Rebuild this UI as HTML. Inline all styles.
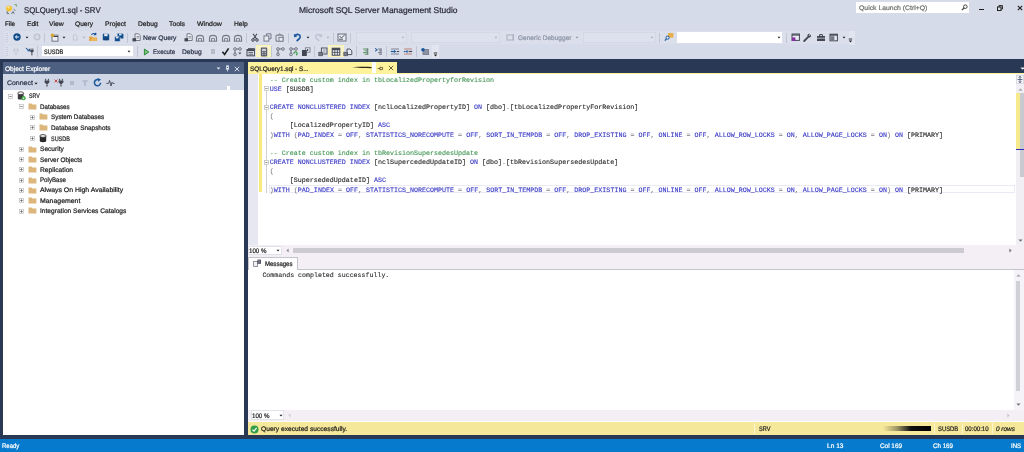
<!DOCTYPE html>
<html><head><meta charset="utf-8"><title>SQLQuery1.sql - SRV</title>
<style>
*{box-sizing:border-box;margin:0;padding:0}
html,body{width:1024px;height:452px;overflow:hidden;background:#d6dbe9;font-family:"Liberation Sans",sans-serif;color:#1e1e1e;text-rendering:geometricPrecision}
#app{position:relative;width:1024px;height:452px;overflow:hidden;background:#d6dbe9;will-change:transform}
.a{position:absolute;white-space:nowrap}
.t{position:absolute;white-space:nowrap;transform-origin:0 50%;-webkit-text-stroke:0.22px currentColor}
.code{-webkit-text-stroke:0.1px currentColor;position:absolute;font-family:"Liberation Mono","DejaVu Sans Mono",monospace;white-space:pre;color:#222}
.kw{color:#3636c6}.cm{color:#3f9350}.gr{color:#808080}
</style></head><body><div id="app">
<svg class="a" style="left:4.00px;top:3.00px" width="14" height="12" viewBox="0 0 14 12"><circle cx="5" cy="5.4" r="3" fill="#f2c230"/><circle cx="4.6" cy="4.2" r="1.3" fill="#f9e08a"/><path d="M10.5 1.6 H12.4 V3.6" fill="none" stroke="#6fa86a" stroke-width="1"/><path d="M3.2 8.2 V10.6 H5 M7.5 10.8 L9 8.6 L10.2 10.8 M9.6 6.4 L11.4 7.6" stroke="#59606e" stroke-width="0.9" fill="none"/></svg>
<div class="t" style="left:23.75px;top:4px;font-size:8.40px;line-height:12px;color:#2a2a38;transform:scaleX(0.9370);">SQLQuery1.sql - SRV</div>
<div class="t" style="left:298.50px;top:4px;font-size:8.40px;line-height:12px;color:#2a2a38;transform:scaleX(1.0095);">Microsoft SQL Server Management Studio</div>
<div class="a" style="left:856px;top:2px;width:113px;height:11px;background:#fff;"></div>
<div class="t" style="left:858.60px;top:3px;font-size:6.60px;line-height:12px;color:#717171;transform:scaleX(1.0389);">Quick Launch (Ctrl+Q)</div>
<svg class="a" style="left:960.50px;top:4.00px" width="7" height="7" viewBox="0 0 7 7"><circle cx="4.3" cy="2.7" r="1.8" fill="none" stroke="#444" stroke-width="1"/><path d="M3 4 L0.8 6.2" stroke="#444" stroke-width="1.2"/></svg>
<div class="a" style="left:978.5px;top:8.5px;width:5px;height:1.5px;background:#1e1e1e;"></div>
<svg class="a" style="left:997.00px;top:4.70px" width="6" height="6" viewBox="0 0 6 6"><rect x="0.5" y="2" width="3.5" height="3.5" fill="none" stroke="#1e1e1e" stroke-width="1"/><path d="M2 2 V0.6 H5.4 V4 H4" fill="none" stroke="#1e1e1e" stroke-width="1"/></svg>
<svg class="a" style="left:1016.80px;top:4.70px" width="6" height="6" viewBox="0 0 6 6"><path d="M0.8 0.8 L5.2 5.2 M5.2 0.8 L0.8 5.2" stroke="#1e1e1e" stroke-width="1.1"/></svg>
<div class="t" style="left:4.75px;top:19px;font-size:6.60px;line-height:12px;color:#1e1e1e;transform:scaleX(0.9403);">File</div>
<div class="t" style="left:26.50px;top:19px;font-size:6.60px;line-height:12px;color:#1e1e1e;transform:scaleX(1.0024);">Edit</div>
<div class="t" style="left:49.10px;top:19px;font-size:6.60px;line-height:12px;color:#1e1e1e;transform:scaleX(1.0326);">View</div>
<div class="t" style="left:75.00px;top:19px;font-size:6.60px;line-height:12px;color:#1e1e1e;transform:scaleX(1.0071);">Query</div>
<div class="t" style="left:105.00px;top:19px;font-size:6.60px;line-height:12px;color:#1e1e1e;transform:scaleX(1.0223);">Project</div>
<div class="t" style="left:137.75px;top:19px;font-size:6.60px;line-height:12px;color:#1e1e1e;transform:scaleX(1.0103);">Debug</div>
<div class="t" style="left:169.25px;top:19px;font-size:6.60px;line-height:12px;color:#1e1e1e;transform:scaleX(1.0384);">Tools</div>
<div class="t" style="left:197.10px;top:19px;font-size:6.60px;line-height:12px;color:#1e1e1e;transform:scaleX(1.0607);">Window</div>
<div class="t" style="left:234.00px;top:19px;font-size:6.60px;line-height:12px;color:#1e1e1e;transform:scaleX(1.0129);">Help</div>
<div class="a" style="left:5px;top:31.3px;width:843.5px;height:12.4px;background:#dadfeb;"></div>
<div class="a" style="left:848.5px;top:30.5px;width:6px;height:14px;background:#e1e5f0;"></div>
<div class="a" style="left:5px;top:45.2px;width:427px;height:12.6px;background:#dadfeb;"></div>
<div class="a" style="left:5.50px;top:33px;width:2px;height:9px;background:repeating-linear-gradient(#b4bacb 0 1px,transparent 1px 2px);opacity:.45"></div>
<svg class="a" style="left:13.00px;top:33.30px" width="8" height="8" viewBox="0 0 8 8"><circle cx="4" cy="4" r="3.7" fill="#114d8a"/><path d="M5.8 4 H2.6 M3.9 2.6 L2.4 4 L3.9 5.4" stroke="#fff" stroke-width="1" fill="none"/></svg>
<svg class="a" style="left:25.00px;top:36.00px" width="4" height="3" viewBox="0 0 4 3"><path d="M0.6000000000000001 0.7 H3.4 L2 2.4 Z" fill="#1e1e1e"/></svg>
<svg class="a" style="left:32.50px;top:33.30px" width="8" height="8" viewBox="0 0 8 8"><circle cx="4" cy="4" r="2.8" fill="#d6dae6" stroke="#bdc2cf" stroke-width="1.3"/></svg>
<div class="a" style="left:44.00px;top:32.5px;width:1px;height:10.5px;background:#bfc6d6"></div>
<svg class="a" style="left:49.50px;top:32.80px" width="9" height="9" viewBox="0 0 9 9"><rect x="2" y="2.2" width="6" height="6" fill="#eceef4" stroke="#747988" stroke-width="1"/><path d="M2 3.5 H8" stroke="#424652" stroke-width="1"/><circle cx="2.5" cy="2.3" r="1.8" fill="#d9a62e"/></svg>
<svg class="a" style="left:62.00px;top:36.00px" width="4" height="3" viewBox="0 0 4 3"><path d="M0.6000000000000001 0.7 H3.4 L2 2.4 Z" fill="#1e1e1e"/></svg>
<svg class="a" style="left:71.00px;top:32.80px" width="8" height="9" viewBox="0 0 8 9"><path d="M2.4 2 H4.8 L6 3.2 V7 H2.4 Z" fill="#dfe3ee" stroke="#bcc1cf" stroke-width="0.9"/></svg>
<svg class="a" style="left:82.00px;top:36.00px" width="4" height="3" viewBox="0 0 4 3"><path d="M0.6000000000000001 0.7 H3.4 L2 2.4 Z" fill="#a9afbf"/></svg>
<svg class="a" style="left:88.00px;top:32.30px" width="10" height="10" viewBox="0 0 10 10"><path d="M1.2 4.5 H4 L5 5.4 H9 V9 H1.2 Z" fill="#e3a240"/><path d="M2.5 9 L4 6 H9.5 L8.5 9 Z" fill="#eeb458"/><path d="M3.5 3 C4.5 1.2 6.5 1 7.5 2.5 M7.8 0.8 V2.8 H5.8" stroke="#1a579c" stroke-width="1.1" fill="none"/></svg>
<svg class="a" style="left:102.00px;top:33.30px" width="8" height="8" viewBox="0 0 8 8"><path d="M0.8 0.8 H6.2 L7.2 1.8 V7.2 H0.8 Z" fill="#0f4c8a"/><rect x="2.2" y="0.8" width="3.4" height="2.4" fill="#dfe6f3"/><rect x="2.2" y="4.8" width="3.6" height="2.4" fill="#173f74"/></svg>
<svg class="a" style="left:114.00px;top:32.80px" width="10" height="9" viewBox="0 0 10 9"><path d="M3.5 0.6 H8.4 L9.4 1.6 V5.6 H3.5 Z" fill="#0f4c8a"/><rect x="5" y="0.6" width="2.6" height="1.8" fill="#dfe6f3"/><path d="M0.6 3.6 H5.2 L6.2 4.6 V8.6 H0.6 Z" fill="#0f4c8a" stroke="#dce0ec" stroke-width="0.6"/><rect x="2" y="3.8" width="2.4" height="1.6" fill="#dfe6f3"/></svg>
<div class="a" style="left:127.00px;top:32.5px;width:1px;height:10.5px;background:#bfc6d6"></div>
<svg class="a" style="left:131.50px;top:32.80px" width="9" height="9" viewBox="0 0 9 9"><path d="M3 0.8 H6.5 L8.2 2.5 V7.5 H3 Z" fill="#eef0f5" stroke="#747988" stroke-width="1"/><path d="M4.5 3.5 H7 M4.5 5 H7" stroke="#747988" stroke-width="0.8"/><rect x="0.5" y="5.2" width="3.6" height="3.2" fill="#424652"/></svg>
<svg class="a" style="left:183.50px;top:32.80px" width="9" height="9" viewBox="0 0 9 9"><path d="M3 0.8 H6.5 L8.2 2.5 V7.5 H3 Z" fill="#eef0f5" stroke="#747988" stroke-width="1"/><path d="M4.5 3.5 H7 M4.5 5 H7" stroke="#747988" stroke-width="0.8"/><rect x="0.5" y="5.2" width="3.6" height="3.2" fill="#424652"/></svg>
<svg class="a" style="left:195.00px;top:32.80px" width="10" height="9" viewBox="0 0 10 9"><path d="M1.5 8 V5 C1.5 1.5 8.5 1.5 8.5 5 V8" fill="none" stroke="#747988" stroke-width="1.1"/><path d="M0.8 8.2 H9.2" stroke="#747988" stroke-width="1"/><path d="M3.5 8 V5.5 H6.5 V8" fill="none" stroke="#747988" stroke-width="0.9"/></svg>
<svg class="a" style="left:208.00px;top:32.80px" width="10" height="9" viewBox="0 0 10 9"><path d="M1.5 8 V5 C1.5 1.5 8.5 1.5 8.5 5 V8" fill="none" stroke="#747988" stroke-width="1.1"/><path d="M0.8 8.2 H9.2" stroke="#747988" stroke-width="1"/><path d="M3.5 8 V5.5 H6.5 V8" fill="none" stroke="#747988" stroke-width="0.9"/></svg>
<svg class="a" style="left:221.00px;top:32.80px" width="10" height="9" viewBox="0 0 10 9"><path d="M1.5 8 V5 C1.5 1.5 8.5 1.5 8.5 5 V8" fill="none" stroke="#747988" stroke-width="1.1"/><path d="M0.8 8.2 H9.2" stroke="#747988" stroke-width="1"/><path d="M3.5 8 V5.5 H6.5 V8" fill="none" stroke="#747988" stroke-width="0.9"/></svg>
<svg class="a" style="left:233.00px;top:32.80px" width="10" height="9" viewBox="0 0 10 9"><path d="M1.5 8 V5 C1.5 1.5 8.5 1.5 8.5 5 V8" fill="none" stroke="#747988" stroke-width="1.1"/><path d="M0.8 8.2 H9.2" stroke="#747988" stroke-width="1"/><path d="M3.5 8 V5.5 H6.5 V8" fill="none" stroke="#747988" stroke-width="0.9"/></svg>
<div class="a" style="left:245.90px;top:32.5px;width:1px;height:10.5px;background:#bfc6d6"></div>
<svg class="a" style="left:251.00px;top:32.80px" width="8" height="9" viewBox="0 0 8 9"><path d="M2 0.8 L5.6 6 M6 0.8 L2.4 6" stroke="#424652" stroke-width="1.1"/><circle cx="2" cy="7" r="1.3" fill="none" stroke="#424652" stroke-width="1"/><circle cx="6" cy="7" r="1.3" fill="none" stroke="#424652" stroke-width="1"/></svg>
<svg class="a" style="left:263.40px;top:32.80px" width="9" height="9" viewBox="0 0 9 9"><path d="M3.5 2.8 V0.8 H8 V5.8 H6" fill="none" stroke="#747988" stroke-width="1"/><rect x="1" y="2.9" width="4.8" height="5.2" fill="#e9ecf3" stroke="#747988" stroke-width="1"/></svg>
<svg class="a" style="left:275.40px;top:32.80px" width="9" height="9" viewBox="0 0 9 9"><path d="M1 2.2 H8 V8.2 H1 Z" fill="none" stroke="#747988" stroke-width="1"/><path d="M3 2.2 L4.5 0.6 L6 2.2" fill="none" stroke="#747988" stroke-width="1"/><rect x="4" y="4.4" width="4" height="3.8" fill="#e9ecf3" stroke="#747988" stroke-width="0.9"/></svg>
<div class="a" style="left:288.00px;top:32.5px;width:1px;height:10.5px;background:#bfc6d6"></div>
<svg class="a" style="left:293.10px;top:32.80px" width="9" height="9" viewBox="0 0 9 9"><path d="M2 2.6 C4.5 0.4 8.2 1.6 7 4.6 C6.4 6 5 7 3.6 8" fill="none" stroke="#1a579c" stroke-width="1.6"/><path d="M0.8 0.8 L1.2 4.4 L4.4 3.2 Z" fill="#1a579c"/></svg>
<svg class="a" style="left:305.90px;top:36.00px" width="4" height="3" viewBox="0 0 4 3"><path d="M0.6000000000000001 0.7 H3.4 L2 2.4 Z" fill="#1e1e1e"/></svg>
<svg class="a" style="left:313.50px;top:32.80px" width="9" height="9" viewBox="0 0 9 9"><path d="M7 2.6 C4.5 0.4 0.8 1.6 2 4.6 C2.6 6 4 7 5.4 8" fill="none" stroke="#bcc2d2" stroke-width="1.4"/><path d="M8.2 0.8 L7.8 4.4 L4.6 3.2 Z" fill="#bcc2d2"/></svg>
<svg class="a" style="left:326.00px;top:36.00px" width="4" height="3" viewBox="0 0 4 3"><path d="M0.6000000000000001 0.7 H3.4 L2 2.4 Z" fill="#a9afbf"/></svg>
<div class="a" style="left:333.00px;top:32.5px;width:1px;height:10.5px;background:#bfc6d6"></div>
<svg class="a" style="left:337.00px;top:32.80px" width="10" height="9" viewBox="0 0 10 9"><rect x="1" y="1" width="8" height="7" fill="#e9ecf3" stroke="#747988" stroke-width="1.1"/><path d="M2.5 3 L4.5 5 L8 1.5 M2 6.2 H6" stroke="#424652" stroke-width="0.9" fill="none"/></svg>
<div class="a" style="left:349.80px;top:32.5px;width:1px;height:10.5px;background:#bfc6d6"></div>
<div class="a" style="left:355.8px;top:32px;width:51.0px;height:11px;background:#dde1ee;border:1px solid #d3d8e6"></div>
<svg class="a" style="left:400.60px;top:36.00px" width="4" height="3" viewBox="0 0 4 3"><path d="M0.6000000000000001 0.7 H3.4 L2 2.4 Z" fill="#a9afbf"/></svg>
<div class="a" style="left:410.8px;top:32px;width:89.19999999999999px;height:11px;background:#dde1ee;border:1px solid #d3d8e6"></div>
<svg class="a" style="left:493.80px;top:36.00px" width="4" height="3" viewBox="0 0 4 3"><path d="M0.6000000000000001 0.7 H3.4 L2 2.4 Z" fill="#a9afbf"/></svg>
<div class="a" style="left:582.5px;top:32px;width:73.5px;height:11px;background:#dde1ee;border:1px solid #d3d8e6"></div>
<svg class="a" style="left:649.80px;top:36.00px" width="4" height="3" viewBox="0 0 4 3"><path d="M0.6000000000000001 0.7 H3.4 L2 2.4 Z" fill="#a9afbf"/></svg>
<svg class="a" style="left:505.50px;top:32.80px" width="9" height="9" viewBox="0 0 9 9"><rect x="1" y="2" width="6" height="5" fill="none" stroke="#aab0c0" stroke-width="1"/><path d="M7.5 1 V7.5" stroke="#aab0c0" stroke-width="1"/></svg>
<svg class="a" style="left:575.00px;top:36.00px" width="4" height="3" viewBox="0 0 4 3"><path d="M0.6000000000000001 0.7 H3.4 L2 2.4 Z" fill="#8d93a3"/></svg>
<div class="a" style="left:659.00px;top:32.5px;width:1px;height:10.5px;background:#bfc6d6"></div>
<svg class="a" style="left:664.30px;top:31.90px" width="10" height="10" viewBox="0 0 10 10"><rect x="4" y="1" width="5.4" height="4.6" fill="#e8b04a"/><circle cx="3.6" cy="5.6" r="1.6" fill="#dfe6f3" stroke="#1a579c" stroke-width="1"/><path d="M2.4 6.8 L0.8 8.6" stroke="#1a579c" stroke-width="1.2"/></svg>
<div class="a" style="left:677.4px;top:32px;width:105px;height:11px;background:#fff"></div>
<svg class="a" style="left:777.00px;top:36.00px" width="4" height="3" viewBox="0 0 4 3"><path d="M0.6000000000000001 0.7 H3.4 L2 2.4 Z" fill="#1e1e1e"/></svg>
<div class="a" style="left:786.10px;top:32.5px;width:1px;height:10.5px;background:#bfc6d6"></div>
<svg class="a" style="left:790.90px;top:32.80px" width="9" height="9" viewBox="0 0 9 9"><rect x="1" y="1" width="7.4" height="6.4" fill="#e9ecf3" stroke="#424652" stroke-width="1"/><path d="M1 2 H8.4" stroke="#424652" stroke-width="1.2"/><rect x="1" y="4.4" width="3.4" height="3.6" fill="#8a2da5"/></svg>
<svg class="a" style="left:803.40px;top:32.80px" width="9" height="9" viewBox="0 0 9 9"><path d="M1.2 8 L5 4.2" stroke="#424652" stroke-width="1.8" stroke-linecap="round"/><path d="M7.8 1.6 L6.3 3.1 L5.6 2.4 L7 0.9 C5.5 0.4 3.9 1.8 4.6 3.6 L5.6 4.6 C7.2 5.2 8.6 3.4 7.8 1.6 Z" fill="#424652"/></svg>
<svg class="a" style="left:816.00px;top:32.80px" width="10" height="9" viewBox="0 0 10 9"><rect x="1" y="3" width="8" height="5" fill="#424652"/><path d="M3.6 3 V1.6 H6.4 V3" fill="none" stroke="#424652" stroke-width="1"/><path d="M1 5.2 H9" stroke="#dce0ec" stroke-width="0.7"/></svg>
<svg class="a" style="left:829.00px;top:32.80px" width="9" height="9" viewBox="0 0 9 9"><rect x="1" y="1.2" width="7.4" height="6.6" fill="#e9ecf3" stroke="#424652" stroke-width="1"/><path d="M1 2 H8.4" stroke="#424652" stroke-width="1.4"/><rect x="1.4" y="3.2" width="4" height="4.4" fill="#747988"/></svg>
<svg class="a" style="left:841.50px;top:36.00px" width="4" height="3" viewBox="0 0 4 3"><path d="M0.6000000000000001 0.7 H3.4 L2 2.4 Z" fill="#1e1e1e"/></svg>
<svg class="a" style="left:848.30px;top:37.50px" width="5" height="5" viewBox="0 0 5 5"><path d="M0.8 1 H4.2" stroke="#1e1e1e" stroke-width="0.9"/><path d="M0.8 2.4 H4.2 L2.5 4.4 Z" fill="#1e1e1e"/></svg>
<div class="t" style="left:143.40px;top:33px;font-size:6.60px;line-height:12px;color:#2b3348;transform:scaleX(1.0148);">New Query</div>
<div class="t" style="left:517.50px;top:33px;font-size:6.60px;line-height:12px;color:#8d93a3;transform:scaleX(0.9920);">Generic Debugger</div>
<div class="a" style="left:5.50px;top:47px;width:2px;height:9px;background:repeating-linear-gradient(#b4bacb 0 1px,transparent 1px 2px);opacity:.45"></div>
<svg class="a" style="left:12.00px;top:47.00px" width="8" height="9" viewBox="0 0 8 9"><path d="M2.5 1 V3 M5.5 1 V3 M1.8 3 H6.2 V4.6 L4 6.4 L1.8 4.6 Z M4 6.4 V8.5" fill="none" stroke="#c0c5d3" stroke-width="0.9"/></svg>
<svg class="a" style="left:24.60px;top:47.00px" width="10" height="9" viewBox="0 0 10 9"><path d="M6 1.4 V2.8 M7.8 1.4 V2.8" stroke="#424652" stroke-width="0.8"/><path d="M5.2 2.8 H8.6 V4.4 L6.9 6 L5.2 4.4 Z" fill="#424652"/><path d="M6.9 5.8 V8.4" stroke="#424652" stroke-width="1"/><path d="M0.8 1 L4.4 3.8 M4.4 3.8 V1.8 M4.4 3.8 H2.4" stroke="#114d8a" stroke-width="1" fill="none"/></svg>
<div class="a" style="left:36.80px;top:46px;width:1px;height:11px;background:#bfc6d6"></div>
<div class="a" style="left:42.3px;top:46.2px;width:90.7px;height:10.2px;background:#fff"></div>
<svg class="a" style="left:127.40px;top:50.30px" width="4" height="3" viewBox="0 0 4 3"><path d="M0.6000000000000001 0.7 H3.4 L2 2.4 Z" fill="#1e1e1e"/></svg>
<div class="a" style="left:136.50px;top:46px;width:1px;height:11px;background:#bfc6d6"></div>
<svg class="a" style="left:142.50px;top:47.50px" width="7" height="8" viewBox="0 0 7 8"><path d="M1.4 1 L5.8 4 L1.4 7 Z" fill="#7cc47c" stroke="#2e8b3a" stroke-width="1"/></svg>
<div class="a" style="left:210.5px;top:49.3px;width:4.6px;height:4.6px;background:#b7bbc8"></div>
<svg class="a" style="left:221.10px;top:47.00px" width="9" height="9" viewBox="0 0 9 9"><path d="M1.4 4.8 L3.6 7.4 L7.6 1.4" fill="none" stroke="#1e1e1e" stroke-width="1.6"/></svg>
<svg class="a" style="left:233.30px;top:46.50px" width="9" height="10" viewBox="0 0 9 10"><rect x="0.8" y="0.8" width="2.4" height="2.4" rx="0.7" fill="none" stroke="#5d616e" stroke-width="0.9"/><rect x="0.8" y="6.2" width="2.4" height="2.4" rx="0.7" fill="none" stroke="#5d616e" stroke-width="0.9"/><rect x="5.8" y="0.8" width="2.4" height="2.4" rx="0.7" fill="none" stroke="#5d616e" stroke-width="0.9"/><path d="M2 3.3 V6.1 M3.3 2 H5.7" stroke="#5d616e" stroke-width="0.9"/><path d="M5.4 5.6 H8.4 L6.9 7.6 Z" fill="#424652"/></svg>
<svg class="a" style="left:245.90px;top:46.50px" width="10" height="10" viewBox="0 0 10 10"><path d="M2 1.6 H8.6 V3" fill="none" stroke="#424652" stroke-width="0.9"/><rect x="1" y="2.6" width="7.4" height="6.2" fill="#e9ecf3" stroke="#424652" stroke-width="1"/><path d="M1 3.4 H8.4" stroke="#424652" stroke-width="1.3"/><path d="M2.4 5.4 H7 M2.4 7.2 H7" stroke="#424652" stroke-width="0.9"/></svg>
<div class="a" style="left:256.4px;top:44.8px;width:15.0px;height:12.700000000000003px;background:#f6f2d0;border:1.5px solid #fbf3b0"></div>
<svg class="a" style="left:260.00px;top:46.60px" width="8" height="10" viewBox="0 0 8 10"><rect x="0.8" y="0.6" width="6.4" height="8.8" rx="0.8" fill="#5c606c"/><rect x="2" y="1.8" width="4" height="2.4" fill="#c9ccd6"/><path d="M2 5.6 H3.4 M4.6 5.6 H6 M2 7.4 H3.4 M4.6 7.4 H6" stroke="#c9ccd6" stroke-width="0.9"/></svg>
<div class="a" style="left:271.25px;top:46px;width:1px;height:11px;background:#bfc6d6"></div>
<svg class="a" style="left:275.50px;top:46.50px" width="9" height="10" viewBox="0 0 9 10"><rect x="0.8" y="0.8" width="2.4" height="2.4" rx="0.7" fill="none" stroke="#5d616e" stroke-width="0.9"/><rect x="0.8" y="6.2" width="2.4" height="2.4" rx="0.7" fill="none" stroke="#5d616e" stroke-width="0.9"/><rect x="5.8" y="0.8" width="2.4" height="2.4" rx="0.7" fill="none" stroke="#5d616e" stroke-width="0.9"/><path d="M2 3.3 V6.1 M3.3 2 H5.7" stroke="#5d616e" stroke-width="0.9"/></svg>
<svg class="a" style="left:288.50px;top:46.50px" width="9" height="10" viewBox="0 0 9 10"><rect x="0.8" y="0.8" width="2.4" height="2.4" rx="0.7" fill="none" stroke="#5d616e" stroke-width="0.9"/><rect x="0.8" y="6.2" width="2.4" height="2.4" rx="0.7" fill="none" stroke="#5d616e" stroke-width="0.9"/><rect x="5.8" y="0.8" width="2.4" height="2.4" rx="0.7" fill="none" stroke="#5d616e" stroke-width="0.9"/><path d="M2 3.3 V6.1 M3.3 2 H5.7" stroke="#5d616e" stroke-width="0.9"/><path d="M5 6.8 A1.6 1.6 0 1 1 7 8" fill="none" stroke="#3c9a48" stroke-width="1.1"/></svg>
<svg class="a" style="left:300.75px;top:46.50px" width="10" height="10" viewBox="0 0 10 10"><rect x="4.4" y="0.8" width="4.6" height="4.4" fill="#e9ecf3" stroke="#747988" stroke-width="0.9"/><rect x="1" y="3" width="4.8" height="6" fill="#424652"/><path d="M6.6 2 V4 " stroke="#424652" stroke-width="1.2"/></svg>
<div class="a" style="left:314.00px;top:46px;width:1px;height:11px;background:#bfc6d6"></div>
<svg class="a" style="left:318.25px;top:46.50px" width="10" height="10" viewBox="0 0 10 10"><rect x="3.4" y="1" width="5.6" height="6" fill="#e4e7ef" stroke="#424652" stroke-width="0.9"/><path d="M5 3 H7.6 M5 5 H7.6" stroke="#747988" stroke-width="0.8"/><rect x="0.8" y="5.2" width="3.6" height="3.6" fill="#747988" stroke="#424652" stroke-width="0.6"/></svg>
<div class="a" style="left:328.4px;top:45px;width:15.200000000000045px;height:12.200000000000003px;background:#f6f2d0;border:1.5px solid #fbf3b0"></div>
<svg class="a" style="left:330.60px;top:46.50px" width="10" height="10" viewBox="0 0 10 10"><rect x="1.2" y="1.2" width="7.6" height="7" fill="#e9ecf3" stroke="#424652" stroke-width="1"/><rect x="1.2" y="1.2" width="7.6" height="2" fill="#424652"/><path d="M1.2 5.4 H8.8 M3.8 3.2 V8.2 M6.4 3.2 V8.2" stroke="#424652" stroke-width="0.8"/></svg>
<svg class="a" style="left:343.25px;top:46.50px" width="10" height="10" viewBox="0 0 10 10"><path d="M4 7.6 V2 H7 L8.8 3.8 V7.6 Z" fill="#e4e7ef" stroke="#424652" stroke-width="0.9"/><rect x="0.8" y="5.2" width="3.8" height="3.6" fill="#747988" stroke="#424652" stroke-width="0.6"/></svg>
<div class="a" style="left:355.90px;top:46px;width:1px;height:11px;background:#bfc6d6"></div>
<svg class="a" style="left:360.50px;top:47.00px" width="9" height="9" viewBox="0 0 9 9"><path d="M2 2 H7.5 M3.5 3.8 H7.5 M2 5.6 H7.5 M3.5 7.2 H7.5" stroke="#5f9d62" stroke-width="1"/><path d="M6.4 1.4 V7.8" stroke="#6e7486" stroke-width="0.9"/></svg>
<svg class="a" style="left:373.50px;top:47.00px" width="9" height="9" viewBox="0 0 9 9"><path d="M1 1.4 L3.4 2.8 L1 4.2" fill="none" stroke="#1a579c" stroke-width="1"/><path d="M4 2 H7.6 M5 3.8 H7.6 M4 5.6 H7.6 M5 7.2 H7.6" stroke="#7b8092" stroke-width="1"/><path d="M7 1.4 V7.8" stroke="#747988" stroke-width="0.9"/></svg>
<div class="a" style="left:386.25px;top:46px;width:1px;height:11px;background:#bfc6d6"></div>
<svg class="a" style="left:390.00px;top:47.00px" width="10" height="9" viewBox="0 0 10 9"><path d="M1 2 H9 M1 7 H9" stroke="#747988" stroke-width="0.9"/><path d="M0.8 4.5 H4.4" stroke="#1a579c" stroke-width="1.2"/><path d="M4 2.9 L6.4 4.5 L4 6.1 Z" fill="#1a579c"/><path d="M6.8 4.5 H9.2" stroke="#424652" stroke-width="1.1"/></svg>
<svg class="a" style="left:402.60px;top:47.00px" width="10" height="9" viewBox="0 0 10 9"><path d="M1 2 H9 M1 7 H9" stroke="#b46a5a" stroke-width="0.8"/><path d="M5.6 4.5 H9.2" stroke="#424652" stroke-width="1.2"/><path d="M4.6 2.9 L2.2 4.5 L4.6 6.1 Z" fill="#1a579c"/><path d="M0.8 4.5 H2.4" stroke="#1a579c" stroke-width="1.1"/></svg>
<div class="a" style="left:415.50px;top:46px;width:1px;height:11px;background:#bfc6d6"></div>
<svg class="a" style="left:420.00px;top:47.00px" width="10" height="9" viewBox="0 0 10 9"><rect x="3" y="2.6" width="5.6" height="5" fill="#8c92a2" stroke="#747988" stroke-width="0.8"/><circle cx="3" cy="2.8" r="1.8" fill="#1a579c"/></svg>
<div class="a" style="left:432px;top:45px;width:7px;height:13px;background:#e3e6f0"></div>
<svg class="a" style="left:432.50px;top:51.50px" width="5" height="5" viewBox="0 0 5 5"><path d="M0.8 1 H4.2" stroke="#1e1e1e" stroke-width="0.9"/><path d="M0.8 2.4 H4.2 L2.5 4.4 Z" fill="#1e1e1e"/></svg>
<div class="t" style="left:44.00px;top:47px;font-size:6.60px;line-height:12px;color:#1e1e1e;transform:scaleX(0.8443);">SUSDB</div>
<div class="t" style="left:153.10px;top:47px;font-size:6.60px;line-height:12px;color:#2b3348;transform:scaleX(0.9288);">Execute</div>
<div class="t" style="left:182.10px;top:47px;font-size:6.60px;line-height:12px;color:#2b3348;transform:scaleX(1.0180);">Debug</div>
<div class="a" style="left:0px;top:59px;width:1024px;height:380px;background:#293955;"></div>
<div class="a" style="left:2.5px;top:62px;width:241.5px;height:12px;background:#4d6082;"></div>
<div class="t" style="left:5.30px;top:64px;font-size:6.60px;line-height:12px;color:#ffffff;transform:scaleX(0.9937);">Object Explorer</div>
<svg class="a" style="left:215.70px;top:67.10px" width="5" height="3" viewBox="0 0 5 3"><path d="M0.6 0.5 H4.4 L2.5 2.5 Z" fill="#e8ecf5"/></svg>
<svg class="a" style="left:225.20px;top:65.00px" width="5" height="7" viewBox="0 0 5 7"><rect x="1.6" y="0.8" width="1.8" height="3" fill="none" stroke="#e8ecf5" stroke-width="0.8"/><path d="M0.8 4 H4.2 M2.5 4 V6.4" stroke="#e8ecf5" stroke-width="0.8"/></svg>
<svg class="a" style="left:234.30px;top:65.50px" width="6" height="6" viewBox="0 0 6 6"><path d="M0.8 0.8 L5.2 5.2 M5.2 0.8 L0.8 5.2" stroke="#e8ecf5" stroke-width="0.9"/></svg>
<div class="a" style="left:2.5px;top:74px;width:241.5px;height:16px;background:#cfd6e5;"></div>
<div class="t" style="left:6.90px;top:78px;font-size:6.60px;line-height:12px;color:#2b3348;transform:scaleX(1.0515);">Connect</div>
<svg class="a" style="left:33.60px;top:81.80px" width="4" height="3" viewBox="0 0 4 3"><path d="M0.30000000000000004 0.7 H3.7 L2 2.4 Z" fill="#1e1e1e"/></svg>
<svg class="a" style="left:42.90px;top:78.40px" width="8" height="9" viewBox="0 0 8 9"><path d="M2.6 0.8 V2.6 M5.4 0.8 V2.6" stroke="#424652" stroke-width="1"/><path d="M1.6 2.6 H6.4 V4.6 L4 6.6 L1.6 4.6 Z" fill="#424652"/><path d="M4 6.4 V8.4" stroke="#424652" stroke-width="1.2"/></svg>
<svg class="a" style="left:57.00px;top:78.40px" width="8" height="9" viewBox="0 0 8 9"><path d="M2.6 0.8 V2.6 M5.4 0.8 V2.6" stroke="#424652" stroke-width="1"/><path d="M1.6 2.6 H6.4 V4.6 L4 6.6 L1.6 4.6 Z" fill="#424652"/><path d="M4 6.4 V8.4" stroke="#424652" stroke-width="1.2"/></svg>
<svg class="a" style="left:54.30px;top:79.30px" width="4" height="4" viewBox="0 0 4 4"><path d="M0.6 0.6 L3.4 3.4 M3.4 0.6 L0.6 3.4" stroke="#c8382c" stroke-width="0.9"/></svg>
<div class="a" style="left:69.8px;top:80.7px;width:4.4px;height:4.4px;background:#b4bacb"></div>
<svg class="a" style="left:80.75px;top:78.90px" width="8" height="8" viewBox="0 0 8 8"><path d="M0.8 1.2 H7.2 L4.8 4 V7 H3.2 V4 Z" fill="#b4bacb"/></svg>
<svg class="a" style="left:92.75px;top:78.40px" width="9" height="9" viewBox="0 0 9 9"><path d="M7.6 4.8 A3.1 3.1 0 1 1 5.4 1.7" fill="none" stroke="#1a579c" stroke-width="1.5"/><path d="M4.6 0 L8 1.6 L5.2 3.8 Z" fill="#1a579c"/></svg>
<svg class="a" style="left:105.50px;top:78.90px" width="9" height="8" viewBox="0 0 9 8"><path d="M0.4 4.4 H2.6 L3.6 1.4 L5 7 L6 3.2 L6.8 4.4 H8.6" fill="none" stroke="#424652" stroke-width="0.9"/></svg>
<div class="a" style="left:227.2px;top:85.5px;width:2.4px;height:4.5px;background:#fff"></div>
<div class="a" style="left:2.5px;top:90px;width:241.5px;height:345px;background:#fff;"></div>
<svg class="a" style="left:8.10px;top:93.70px" width="5" height="5" viewBox="0 0 5 5"><rect x="0.4" y="0.4" width="4.2" height="4.2" fill="#fff" stroke="#bdbdbd" stroke-width="0.7"/><path d="M1.2 2.5 H3.8" stroke="#666" stroke-width="0.7"/></svg>
<svg class="a" style="left:16.80px;top:90.90px" width="9" height="10" viewBox="0 0 9 10"><path d="M0.8 2.2 V7.4 C0.8 9 6.6 9 6.6 7.4 V2.2 Z" fill="#3a3a3a"/><ellipse cx="3.7" cy="2.2" rx="2.9" ry="1.4" fill="#f4f4f4" stroke="#3a3a3a" stroke-width="0.8"/><circle cx="6.6" cy="7.2" r="2.1" fill="#3fa845"/><path d="M5.9 6.2 L7.6 7.2 L5.9 8.2 Z" fill="#fff"/></svg>
<div class="t" style="left:29.00px;top:91px;font-size:6.60px;line-height:12px;color:#1e1e1e;transform:scaleX(0.7991);">SRV</div>
<svg class="a" style="left:18.80px;top:104.20px" width="5" height="5" viewBox="0 0 5 5"><rect x="0.4" y="0.4" width="4.2" height="4.2" fill="#fff" stroke="#bdbdbd" stroke-width="0.7"/><path d="M1.2 2.5 H3.8" stroke="#666" stroke-width="0.7"/></svg>
<svg class="a" style="left:27.75px;top:102.90px" width="9" height="7" viewBox="0 0 9 7"><path d="M0.5 0.6 H3.6 L4.4 1.5 H8.4 V6.5 H0.5 Z" fill="#dcb67a"/></svg>
<div class="t" style="left:39.75px;top:102px;font-size:6.60px;line-height:12px;color:#1e1e1e;transform:scaleX(0.9397);">Databases</div>
<svg class="a" style="left:29.75px;top:114.60px" width="5" height="5" viewBox="0 0 5 5"><rect x="0.4" y="0.4" width="4.2" height="4.2" fill="#fff" stroke="#bdbdbd" stroke-width="0.7"/><path d="M1.2 2.5 H3.8" stroke="#666" stroke-width="0.7"/><path d="M2.5 1.2 V3.8" stroke="#555" stroke-width="0.7"/></svg>
<svg class="a" style="left:38.60px;top:113.30px" width="9" height="7" viewBox="0 0 9 7"><path d="M0.5 0.6 H3.6 L4.4 1.5 H8.4 V6.5 H0.5 Z" fill="#dcb67a"/></svg>
<div class="t" style="left:50.60px;top:112px;font-size:6.60px;line-height:12px;color:#1e1e1e;transform:scaleX(0.9595);">System Databases</div>
<svg class="a" style="left:29.75px;top:125.10px" width="5" height="5" viewBox="0 0 5 5"><rect x="0.4" y="0.4" width="4.2" height="4.2" fill="#fff" stroke="#bdbdbd" stroke-width="0.7"/><path d="M1.2 2.5 H3.8" stroke="#666" stroke-width="0.7"/><path d="M2.5 1.2 V3.8" stroke="#555" stroke-width="0.7"/></svg>
<svg class="a" style="left:38.60px;top:123.80px" width="9" height="7" viewBox="0 0 9 7"><path d="M0.5 0.6 H3.6 L4.4 1.5 H8.4 V6.5 H0.5 Z" fill="#dcb67a"/></svg>
<div class="t" style="left:50.60px;top:123px;font-size:6.60px;line-height:12px;color:#1e1e1e;transform:scaleX(0.9710);">Database Snapshots</div>
<svg class="a" style="left:29.75px;top:136.40px" width="5" height="5" viewBox="0 0 5 5"><rect x="0.4" y="0.4" width="4.2" height="4.2" fill="#fff" stroke="#bdbdbd" stroke-width="0.7"/><path d="M1.2 2.5 H3.8" stroke="#666" stroke-width="0.7"/><path d="M2.5 1.2 V3.8" stroke="#555" stroke-width="0.7"/></svg>
<svg class="a" style="left:39.10px;top:134.10px" width="8" height="9" viewBox="0 0 8 9"><path d="M0.8 2 V7 C0.8 8.6 7.2 8.6 7.2 7 V2 Z" fill="#2b2b2b"/><ellipse cx="4" cy="2" rx="3.2" ry="1.4" fill="#f4f4f4" stroke="#2b2b2b" stroke-width="0.8"/></svg>
<div class="t" style="left:51.00px;top:134px;font-size:6.60px;line-height:12px;color:#1e1e1e;transform:scaleX(0.8311);">SUSDB</div>
<svg class="a" style="left:18.80px;top:146.90px" width="5" height="5" viewBox="0 0 5 5"><rect x="0.4" y="0.4" width="4.2" height="4.2" fill="#fff" stroke="#bdbdbd" stroke-width="0.7"/><path d="M1.2 2.5 H3.8" stroke="#666" stroke-width="0.7"/><path d="M2.5 1.2 V3.8" stroke="#555" stroke-width="0.7"/></svg>
<svg class="a" style="left:27.75px;top:145.60px" width="9" height="7" viewBox="0 0 9 7"><path d="M0.5 0.6 H3.6 L4.4 1.5 H8.4 V6.5 H0.5 Z" fill="#dcb67a"/></svg>
<div class="t" style="left:39.80px;top:144px;font-size:6.60px;line-height:12px;color:#1e1e1e;transform:scaleX(0.9982);">Security</div>
<svg class="a" style="left:18.80px;top:157.20px" width="5" height="5" viewBox="0 0 5 5"><rect x="0.4" y="0.4" width="4.2" height="4.2" fill="#fff" stroke="#bdbdbd" stroke-width="0.7"/><path d="M1.2 2.5 H3.8" stroke="#666" stroke-width="0.7"/><path d="M2.5 1.2 V3.8" stroke="#555" stroke-width="0.7"/></svg>
<svg class="a" style="left:27.75px;top:155.90px" width="9" height="7" viewBox="0 0 9 7"><path d="M0.5 0.6 H3.6 L4.4 1.5 H8.4 V6.5 H0.5 Z" fill="#dcb67a"/></svg>
<div class="t" style="left:39.80px;top:155px;font-size:6.60px;line-height:12px;color:#1e1e1e;transform:scaleX(0.9668);">Server Objects</div>
<svg class="a" style="left:18.80px;top:167.30px" width="5" height="5" viewBox="0 0 5 5"><rect x="0.4" y="0.4" width="4.2" height="4.2" fill="#fff" stroke="#bdbdbd" stroke-width="0.7"/><path d="M1.2 2.5 H3.8" stroke="#666" stroke-width="0.7"/><path d="M2.5 1.2 V3.8" stroke="#555" stroke-width="0.7"/></svg>
<svg class="a" style="left:27.75px;top:166.00px" width="9" height="7" viewBox="0 0 9 7"><path d="M0.5 0.6 H3.6 L4.4 1.5 H8.4 V6.5 H0.5 Z" fill="#dcb67a"/></svg>
<div class="t" style="left:39.80px;top:165px;font-size:6.60px;line-height:12px;color:#1e1e1e;transform:scaleX(1.0137);">Replication</div>
<svg class="a" style="left:18.80px;top:177.90px" width="5" height="5" viewBox="0 0 5 5"><rect x="0.4" y="0.4" width="4.2" height="4.2" fill="#fff" stroke="#bdbdbd" stroke-width="0.7"/><path d="M1.2 2.5 H3.8" stroke="#666" stroke-width="0.7"/><path d="M2.5 1.2 V3.8" stroke="#555" stroke-width="0.7"/></svg>
<svg class="a" style="left:27.75px;top:176.60px" width="9" height="7" viewBox="0 0 9 7"><path d="M0.5 0.6 H3.6 L4.4 1.5 H8.4 V6.5 H0.5 Z" fill="#dcb67a"/></svg>
<div class="t" style="left:39.80px;top:175px;font-size:6.60px;line-height:12px;color:#1e1e1e;transform:scaleX(0.9325);">PolyBase</div>
<svg class="a" style="left:18.80px;top:187.90px" width="5" height="5" viewBox="0 0 5 5"><rect x="0.4" y="0.4" width="4.2" height="4.2" fill="#fff" stroke="#bdbdbd" stroke-width="0.7"/><path d="M1.2 2.5 H3.8" stroke="#666" stroke-width="0.7"/><path d="M2.5 1.2 V3.8" stroke="#555" stroke-width="0.7"/></svg>
<svg class="a" style="left:27.75px;top:186.60px" width="9" height="7" viewBox="0 0 9 7"><path d="M0.5 0.6 H3.6 L4.4 1.5 H8.4 V6.5 H0.5 Z" fill="#dcb67a"/></svg>
<div class="t" style="left:39.80px;top:185px;font-size:6.60px;line-height:12px;color:#1e1e1e;transform:scaleX(1.0480);">Always On High Availability</div>
<svg class="a" style="left:18.80px;top:198.30px" width="5" height="5" viewBox="0 0 5 5"><rect x="0.4" y="0.4" width="4.2" height="4.2" fill="#fff" stroke="#bdbdbd" stroke-width="0.7"/><path d="M1.2 2.5 H3.8" stroke="#666" stroke-width="0.7"/><path d="M2.5 1.2 V3.8" stroke="#555" stroke-width="0.7"/></svg>
<svg class="a" style="left:27.75px;top:197.00px" width="9" height="7" viewBox="0 0 9 7"><path d="M0.5 0.6 H3.6 L4.4 1.5 H8.4 V6.5 H0.5 Z" fill="#dcb67a"/></svg>
<div class="t" style="left:39.80px;top:196px;font-size:6.60px;line-height:12px;color:#1e1e1e;transform:scaleX(1.0487);">Management</div>
<svg class="a" style="left:18.80px;top:208.60px" width="5" height="5" viewBox="0 0 5 5"><rect x="0.4" y="0.4" width="4.2" height="4.2" fill="#fff" stroke="#bdbdbd" stroke-width="0.7"/><path d="M1.2 2.5 H3.8" stroke="#666" stroke-width="0.7"/><path d="M2.5 1.2 V3.8" stroke="#555" stroke-width="0.7"/></svg>
<svg class="a" style="left:27.75px;top:207.30px" width="9" height="7" viewBox="0 0 9 7"><path d="M0.5 0.6 H3.6 L4.4 1.5 H8.4 V6.5 H0.5 Z" fill="#dcb67a"/></svg>
<div class="t" style="left:39.80px;top:206px;font-size:6.60px;line-height:12px;color:#1e1e1e;transform:scaleX(1.0022);">Integration Services Catalogs</div>
<div class="a" style="left:247.5px;top:62.2px;width:149.3px;height:12px;background:#fff29d;"></div>
<div class="t" style="left:250.00px;top:64px;font-size:6.60px;line-height:12px;color:#1e1e1e;transform:scaleX(0.9608);">SQLQuery1.sql - S...</div>
<svg class="a" style="left:352.00px;top:65.50px" width="20" height="3" viewBox="0 0 20 3"><path d="M0 1.2 C6 0.8 12 0.6 19.5 0.9 L19.5 2.3 C12 2.2 6 1.8 0 1.3 Z" fill="#2a2418"/></svg>
<div class="a" style="left:371.6px;top:61.8px;width:4px;height:12.4px;background:#fff"></div>
<svg class="a" style="left:377.40px;top:65.50px" width="7" height="5" viewBox="0 0 7 5"><path d="M0.6 2.5 H3 M3 0.8 V4.2 M3 1.4 H5.6 V3.6 H3" fill="none" stroke="#5a5330" stroke-width="0.8"/></svg>
<svg class="a" style="left:388.20px;top:65.00px" width="6" height="6" viewBox="0 0 6 6"><path d="M0.8 0.8 L5.2 5.2 M5.2 0.8 L0.8 5.2" stroke="#5a5330" stroke-width="0.9"/></svg>
<svg class="a" style="left:1019.90px;top:67.00px" width="5" height="3" viewBox="0 0 5 3"><path d="M0.4 0.5 H4.6 L2.5 2.7 Z" fill="#e8ecf5"/></svg>
<div class="a" style="left:247.5px;top:73px;width:776.5px;height:1.2px;background:#fff29d;"></div>
<div class="a" style="left:247.5px;top:74.2px;width:776.5px;height:171px;background:#fff;"></div>
<div class="a" style="left:247.5px;top:74.2px;width:10px;height:171px;background:#e6e7f0;"></div>
<div class="a" style="left:258.6px;top:74.2px;width:3.5px;height:118px;background:#f7e97a"></div>
<div class="a" style="left:265.8px;top:88px;width:0.8px;height:104.5px;background:#d0d0d0"></div>
<svg class="a" style="left:263.60px;top:86.28px" width="5" height="5" viewBox="0 0 5 5"><rect x="0.4" y="0.4" width="4.2" height="4.2" fill="#fff" stroke="#bcbcbc" stroke-width="0.7"/><path d="M1.2 2.5 H3.8" stroke="#777" stroke-width="0.7"/></svg>
<svg class="a" style="left:263.60px;top:104.64px" width="5" height="5" viewBox="0 0 5 5"><rect x="0.4" y="0.4" width="4.2" height="4.2" fill="#fff" stroke="#bcbcbc" stroke-width="0.7"/><path d="M1.2 2.5 H3.8" stroke="#777" stroke-width="0.7"/></svg>
<svg class="a" style="left:263.60px;top:159.72px" width="5" height="5" viewBox="0 0 5 5"><rect x="0.4" y="0.4" width="4.2" height="4.2" fill="#fff" stroke="#bcbcbc" stroke-width="0.7"/><path d="M1.2 2.5 H3.8" stroke="#777" stroke-width="0.7"/></svg>
<div class="a" style="left:269px;top:184.6px;width:746px;height:8.8px;border:1px solid #eaeaf4"></div>
<div class="code" style="left:269.8px;top:76px;font-size:6.683px;line-height:10px"><span class="cm">-- Create custom index in tbLocalizedPropertyforRevision</span></div>
<div class="code" style="left:269.8px;top:85px;font-size:6.683px;line-height:10px"><span class="kw">USE</span> [SUSDB]</div>
<div class="code" style="left:269.8px;top:103px;font-size:6.683px;line-height:10px"><span class="kw">CREATE NONCLUSTERED INDEX</span> [nclLocalizedPropertyID] <span class="kw">ON</span> [dbo]<span class="gr">.</span>[tbLocalizedPropertyForRevision]</div>
<div class="code" style="left:269.8px;top:112px;font-size:6.683px;line-height:10px"><span class="gr">(</span></div>
<div class="code" style="left:269.8px;top:121px;font-size:6.683px;line-height:10px">     [LocalizedPropertyID] <span class="kw">ASC</span></div>
<div class="code" style="left:269.8px;top:131px;font-size:6.683px;line-height:10px"><span class="gr">)</span><span class="kw">WITH</span> <span class="gr">(</span><span class="kw">PAD_INDEX</span> <span class="gr">=</span> <span class="kw">OFF</span><span class="gr">,</span> <span class="kw">STATISTICS_NORECOMPUTE</span> <span class="gr">=</span> <span class="kw">OFF</span><span class="gr">,</span> <span class="kw">SORT_IN_TEMPDB</span> <span class="gr">=</span> <span class="kw">OFF</span><span class="gr">,</span> <span class="kw">DROP_EXISTING</span> <span class="gr">=</span> <span class="kw">OFF</span><span class="gr">,</span> <span class="kw">ONLINE</span> <span class="gr">=</span> <span class="kw">OFF</span><span class="gr">,</span> <span class="kw">ALLOW_ROW_LOCKS</span> <span class="gr">=</span> <span class="kw">ON</span><span class="gr">,</span> <span class="kw">ALLOW_PAGE_LOCKS</span> <span class="gr">=</span> <span class="kw">ON</span><span class="gr">)</span> <span class="kw">ON</span> [PRIMARY]</div>
<div class="code" style="left:269.8px;top:149px;font-size:6.683px;line-height:10px"><span class="cm">-- Create custom index in tbRevisionSupersedesUpdate</span></div>
<div class="code" style="left:269.8px;top:158px;font-size:6.683px;line-height:10px"><span class="kw">CREATE NONCLUSTERED INDEX</span> [nclSupercededUpdateID] <span class="kw">ON</span> [dbo]<span class="gr">.</span>[tbRevisionSupersedesUpdate]</div>
<div class="code" style="left:269.8px;top:167px;font-size:6.683px;line-height:10px"><span class="gr">(</span></div>
<div class="code" style="left:269.8px;top:176px;font-size:6.683px;line-height:10px">     [SupersededUpdateID] <span class="kw">ASC</span></div>
<div class="code" style="left:269.8px;top:186px;font-size:6.683px;line-height:10px"><span class="gr">)</span><span class="kw">WITH</span> <span class="gr">(</span><span class="kw">PAD_INDEX</span> <span class="gr">=</span> <span class="kw">OFF</span><span class="gr">,</span> <span class="kw">STATISTICS_NORECOMPUTE</span> <span class="gr">=</span> <span class="kw">OFF</span><span class="gr">,</span> <span class="kw">SORT_IN_TEMPDB</span> <span class="gr">=</span> <span class="kw">OFF</span><span class="gr">,</span> <span class="kw">DROP_EXISTING</span> <span class="gr">=</span> <span class="kw">OFF</span><span class="gr">,</span> <span class="kw">ONLINE</span> <span class="gr">=</span> <span class="kw">OFF</span><span class="gr">,</span> <span class="kw">ALLOW_ROW_LOCKS</span> <span class="gr">=</span> <span class="kw">ON</span><span class="gr">,</span> <span class="kw">ALLOW_PAGE_LOCKS</span> <span class="gr">=</span> <span class="kw">ON</span><span class="gr">)</span> <span class="kw">ON</span> [PRIMARY]</div>
<div class="a" style="left:1016px;top:74.2px;width:8px;height:171px;background:#f1eef4"></div>
<svg class="a" style="left:1016.00px;top:75.00px" width="8" height="9" viewBox="0 0 8 9"><rect x="0.4" y="0.4" width="7.2" height="8.2" fill="#f4f4f8" stroke="#c8c8d4" stroke-width="0.6"/><path d="M4 1.4 V7.6 M1.6 4.5 H6.4 M2.8 2.6 L4 1.2 L5.2 2.6 M2.8 6.4 L4 7.8 L5.2 6.4" stroke="#54607c" stroke-width="0.9" fill="none"/></svg>
<svg class="a" style="left:1017.50px;top:87.50px" width="5" height="3" viewBox="0 0 5 3"><path d="M0.4 2.6 H4.6 L2.5 0.4 Z" fill="#9a9aa6"/></svg>
<div class="a" style="left:1016px;top:93.3px;width:3.6px;height:56.5px;background:#f6ea8c"></div>
<div class="a" style="left:1019.6px;top:93.3px;width:4.4px;height:83.6px;background:#c9c9d0"></div>
<div class="a" style="left:1016px;top:149.4px;width:8px;height:1px;background:#3030c0"></div>
<svg class="a" style="left:1018.10px;top:238.50px" width="5" height="3" viewBox="0 0 5 3"><path d="M0.4 0.5 H4.6 L2.5 2.7 Z" fill="#70707a"/></svg>
<div class="a" style="left:247.5px;top:245px;width:776.5px;height:11.5px;background:#f3eff4;"></div>
<div class="a" style="left:248px;top:245.5px;width:34px;height:9.4px;background:#fff;border:1px solid #e2e2ea"></div>
<svg class="a" style="left:276.20px;top:249.30px" width="4" height="3" viewBox="0 0 4 3"><path d="M0.5 0.7 H3.5 L2 2.4 Z" fill="#1e1e1e"/></svg>
<svg class="a" style="left:285.80px;top:247.90px" width="3" height="5" viewBox="0 0 3 5"><path d="M2.6 0.5 V4.5 L0.4 2.5 Z" fill="#8a8a96"/></svg>
<div class="a" style="left:292.5px;top:247.6px;width:671.5px;height:5.2px;background:#cbcbd1"></div>
<svg class="a" style="left:1009.20px;top:247.90px" width="3" height="5" viewBox="0 0 3 5"><path d="M0.4 0.5 V4.5 L2.6 2.5 Z" fill="#70707a"/></svg>
<div class="t" style="left:249.00px;top:246px;font-size:6.60px;line-height:12px;color:#1e1e1e;transform:scaleX(0.9351);">100 %</div>
<div class="a" style="left:247.5px;top:256.5px;width:776.5px;height:13.5px;background:#f3eff4;"></div>
<div class="a" style="left:247.5px;top:269px;width:776.5px;height:1px;background:#c4c4cc"></div>
<div class="a" style="left:248px;top:257px;width:49.6px;height:13px;background:#fff;border:1px solid #c4c4cc;border-bottom:none"></div>
<svg class="a" style="left:252.50px;top:258.80px" width="9" height="8" viewBox="0 0 9 8"><rect x="0.6" y="2.4" width="4" height="5" fill="#f2f2f6" stroke="#7b7b88" stroke-width="0.8"/><rect x="4.4" y="0.6" width="3.6" height="4.2" fill="#4a4a58"/><path d="M5.2 1.8 H7.2 M5.2 3.2 H7.2" stroke="#dcdce4" stroke-width="0.5"/></svg>
<div class="t" style="left:265.00px;top:259px;font-size:6.60px;line-height:12px;color:#1e1e1e;transform:scaleX(0.9142);">Messages</div>
<div class="a" style="left:247.5px;top:270px;width:776.5px;height:140px;background:#fff;"></div>
<div class="code" style="left:262.4px;top:270px;font-size:6.62px;line-height:10px;color:#2a2a2a">Commands completed successfully.</div>
<div class="a" style="left:1014px;top:270px;width:10px;height:140px;background:#f5f3f7"></div>
<svg class="a" style="left:1016.00px;top:274.10px" width="5" height="3" viewBox="0 0 5 3"><path d="M0.4 2.6 H4.6 L2.5 0.4 Z" fill="#9a9aa6"/></svg>
<div class="a" style="left:1016.4px;top:280.5px;width:3.3px;height:110px;background:#d0d0d7"></div>
<svg class="a" style="left:1015.90px;top:403.10px" width="5" height="3" viewBox="0 0 5 3"><path d="M0.4 0.5 H4.6 L2.5 2.7 Z" fill="#70707a"/></svg>
<div class="a" style="left:247.5px;top:410px;width:776.5px;height:11px;background:#f3eff4;"></div>
<div class="a" style="left:250.6px;top:410.3px;width:33.79999999999998px;height:9.4px;background:#fff;border:1px solid #e2e2ea"></div>
<svg class="a" style="left:278.60px;top:414.10px" width="4" height="3" viewBox="0 0 4 3"><path d="M0.5 0.7 H3.5 L2 2.4 Z" fill="#1e1e1e"/></svg>
<svg class="a" style="left:288.20px;top:412.70px" width="3" height="5" viewBox="0 0 3 5"><path d="M2.6 0.5 V4.5 L0.4 2.5 Z" fill="#cdcdd6"/></svg>
<svg class="a" style="left:1007.00px;top:412.70px" width="3" height="5" viewBox="0 0 3 5"><path d="M0.4 0.5 V4.5 L2.6 2.5 Z" fill="#c4c4cc"/></svg>
<div class="t" style="left:251.50px;top:411px;font-size:6.60px;line-height:12px;color:#1e1e1e;transform:scaleX(0.9351);">100 %</div>
<div class="a" style="left:247.5px;top:420.6px;width:776.5px;height:1.4px;background:#fdfcf8;"></div>
<div class="a" style="left:247.5px;top:422px;width:776.5px;height:13.3px;background:#f6e89a;"></div>
<svg class="a" style="left:249.60px;top:424.60px" width="9" height="9" viewBox="0 0 9 9"><circle cx="4.5" cy="4.5" r="4" fill="#2f9e44"/><path d="M2.4 4.6 L4 6.2 L6.6 2.9" fill="none" stroke="#fff" stroke-width="1.2"/></svg>
<div class="a" style="left:883px;top:426.2px;width:48px;height:4.4px;background:linear-gradient(90deg,rgba(20,20,20,0) 0,rgba(20,20,20,.4) 30%,#111 58%,#000 100%)"></div>
<div class="a" style="left:754px;top:423px;width:1px;height:11px;background:#fbf6d2"></div>
<div class="a" style="left:934px;top:423px;width:1px;height:11px;background:#fbf6d2"></div>
<div class="a" style="left:961.6px;top:423px;width:1px;height:11px;background:#fbf6d2"></div>
<div class="a" style="left:992.4px;top:423px;width:1px;height:11px;background:#fbf6d2"></div>
<div class="t" style="left:261.25px;top:424px;font-size:6.60px;line-height:12px;color:#1e1e1e;transform:scaleX(1.0105);">Query executed successfully.</div>
<div class="t" style="left:758.50px;top:424px;font-size:6.60px;line-height:12px;color:#1e1e1e;transform:scaleX(0.8549);">SRV</div>
<div class="t" style="left:937.80px;top:424px;font-size:6.60px;line-height:12px;color:#1e1e1e;transform:scaleX(0.8883);">SUSDB</div>
<div class="t" style="left:965.00px;top:424px;font-size:6.60px;line-height:12px;color:#1e1e1e;transform:scaleX(0.9186);">00:00:10</div>
<div class="t" style="left:996.00px;top:424px;font-size:6.60px;line-height:12px;color:#1e1e1e;transform:scaleX(0.9774);font-style:italic;">0 rows</div>
<div class="a" style="left:0px;top:439px;width:1024px;height:13px;background:#067acc;"></div>
<div class="t" style="left:1.70px;top:441px;font-size:6.60px;line-height:12px;color:#ffffff;transform:scaleX(0.9068);">Ready</div>
<div class="t" style="left:827.00px;top:441px;font-size:6.60px;line-height:12px;color:#ffffff;transform:scaleX(0.9990);">Ln 13</div>
<div class="t" style="left:880.00px;top:441px;font-size:6.60px;line-height:12px;color:#ffffff;transform:scaleX(0.9671);">Col 169</div>
<div class="t" style="left:933.00px;top:441px;font-size:6.60px;line-height:12px;color:#ffffff;transform:scaleX(0.9397);">Ch 169</div>
<div class="t" style="left:1010.80px;top:441px;font-size:6.60px;line-height:12px;color:#ffffff;transform:scaleX(0.9271);">INS</div>
</div></body></html>
